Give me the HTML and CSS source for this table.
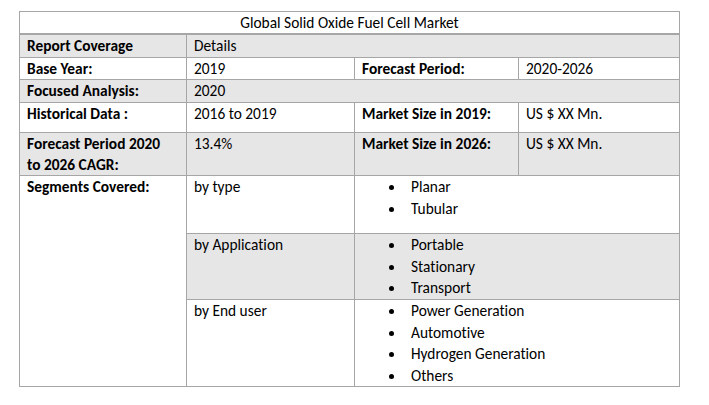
FILE: index.html
```html
<!DOCTYPE html>
<html>
<head>
<meta charset="utf-8">
<link rel="stylesheet" href="styles.css">
</head>
<body>
<table class="market">
  <colgroup>
    <col class="c1"><col class="c2"><col class="c3"><col class="c4">
  </colgroup>
  <tr class="r-title"><td colspan="4" class="title">Global Solid Oxide Fuel Cell Market</td></tr>
  <tr class="grey r-a"><td class="b">Report Coverage</td><td colspan="3">Details</td></tr>
  <tr class="r-b"><td class="b">Base Year:</td><td>2019</td><td class="b">Forecast Period:</td><td>2020-2026</td></tr>
  <tr class="grey r-b"><td class="b">Focused Analysis:</td><td colspan="3">2020</td></tr>
  <tr class="r-c"><td class="b">Historical Data :</td><td>2016 to 2019</td><td class="b">Market Size in 2019:</td><td>US $ XX Mn.</td></tr>
  <tr class="grey r-d"><td class="b">Forecast Period 2020<br>to 2026 CAGR:</td><td>13.4%</td><td class="b">Market Size in 2026:</td><td>US $ XX Mn.</td></tr>
  <tr class="r-e"><td class="b seg" rowspan="3">Segments Covered:</td><td>by type</td>
    <td colspan="2"><ul class="bl"><li>Planar</li><li>Tubular</li></ul></td></tr>
  <tr class="grey r-f"><td>by Application</td>
    <td colspan="2"><ul class="bl"><li>Portable</li><li>Stationary</li><li>Transport</li></ul></td></tr>
  <tr class="r-g"><td>by End user</td>
    <td colspan="2"><ul class="bl"><li>Power Generation</li><li>Automotive</li><li>Hydrogen Generation</li><li>Others</li></ul></td></tr>
</table>
</body>
</html>
```
FILE: styles.css
```css
html, body {
  margin: 0;
  padding: 0;
  background: #ffffff;
}
body {
  padding: 11px 0 0 19px;
  font-family: Carlito, Lato, "Liberation Sans", sans-serif;
  font-size: 15.4px;
  font-variant-ligatures: none;
  color: #000000;
}
.market {
  border-collapse: collapse;
  table-layout: fixed;
  width: 660px;
}
.c1 { width: 167px; }
.c2 { width: 168px; }
.c3 { width: 164px; }
.c4 { width: 161px; }
.market td {
  border: 1px solid #a6a6a6;
  padding: 0 7px;
  vertical-align: top;
  line-height: 21.4px;
  white-space: nowrap;
}
.market .title {
  text-align: center;
  border-bottom: 2px solid #a6a6a6;
}
.b { font-weight: 700; }
.grey td { background: #e7e6e6; }
.grey td.seg, .seg { background: #ffffff; }
.r-title td { height: 21px; }
.r-a td { height: 21px; }
.r-b td { height: 21px; }
.r-c td { height: 29px; }
.r-d td { height: 39px; }
.r-e td { height: 57px; }
.r-f td { height: 65px; }
.r-g td { height: 86px; }
.bl {
  list-style: none;
  margin: 0;
  padding: 0 0 0 49px;
}
.bl li {
  position: relative;
}
.bl li::before {
  content: "";
  position: absolute;
  left: -22px;
  top: 9px;
  width: 5px;
  height: 5px;
  border-radius: 50%;
  background: #000000;
}
```
